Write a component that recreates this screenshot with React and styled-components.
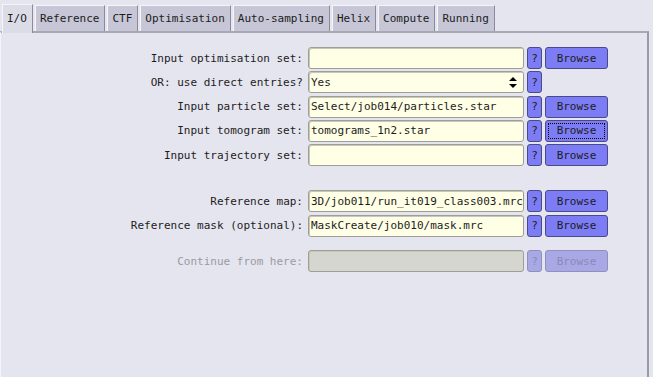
import React from "react";
import styled, { createGlobalStyle } from "styled-components";

const GlobalStyle = createGlobalStyle`
  html, body {
    margin: 0;
    padding: 0;
    background: #e5e5ef;
  }
  body {
    font-family: "DejaVu Sans Mono", "Liberation Mono", monospace;
    font-size: 11px;
    color: #1c1c1c;
  }
`;

const Window = styled.div`
  width: 653px;
  height: 377px;
  display: flex;
  flex-direction: column;
  background: #e5e5ef;
  overflow: hidden;
`;

const TabBar = styled.div`
  display: flex;
  align-items: flex-end;
  height: 31px;
  padding-left: 2px;
  gap: 2px;
`;

const Tab = styled.div`
  height: ${(p) => (p.active ? "29px" : "26px")};
  padding: 0 5px 0 4px;
  display: flex;
  align-items: center;
  box-sizing: border-box;
  background: ${(p) => (p.active ? "#dcdce6" : "#c6c6d6")};
  border-left: 1px solid #f4f4fa;
  border-top: 1px solid #f4f4fa;
  border-right: 1px solid #8a8a98;
  margin-bottom: ${(p) => (p.active ? "-2px" : "0")};
  position: relative;
  z-index: ${(p) => (p.active ? 2 : 1)};
  padding-bottom: ${(p) => (p.active ? "2px" : "0")};
  white-space: nowrap;
`;

const Panel = styled.div`
  flex: 1;
  width: 649px;
  box-sizing: border-box;
  border-top: 2px solid #a8a8b4;
  border-left: 1px solid #f4f4fa;
  border-right: 2px solid #9a9aa6;
  padding-top: 14px;
  display: flex;
  flex-direction: column;
  gap: 2.3px;
`;

const Row = styled.div`
  display: grid;
  grid-template-columns: 304px 216px 15px 63px;
  column-gap: 3px;
  height: 22px;
  align-items: center;
  margin-top: ${(p) => p.space || 0}px;
`;

const Label = styled.div`
  text-align: right;
  padding-right: 2px;
  color: ${(p) => (p.disabled ? "#9a9aa2" : "#1c1c1c")};
  white-space: nowrap;
`;

const Field = styled.div`
  height: 22px;
  box-sizing: border-box;
  border: 1px solid #9e9e98;
  border-radius: 3px;
  background: ${(p) => (p.disabled ? "#d6d6d0" : "#ffffe6")};
  box-shadow: inset 1px 1px 0 #c8c8b8;
  padding: 0 2px;
  display: flex;
  align-items: center;
  overflow: hidden;
  white-space: nowrap;
`;

const SelectField = styled(Field)`
  justify-content: space-between;
  padding-right: 6px;
  background: #ffffe8;
`;

const Arrows = styled.svg`
  display: block;
`;

const HelpButton = styled.div`
  height: 22px;
  box-sizing: border-box;
  border: 1px solid ${(p) => (p.disabled ? "#9090c0" : "#4a4a8a")};
  border-radius: 3px;
  background: ${(p) => (p.disabled ? "#a8a8e4" : "#7c7cf4")};
  color: ${(p) => (p.disabled ? "#8a8ab8" : "#1c1c1c")};
  display: flex;
  align-items: center;
  justify-content: center;
`;

const BrowseButton = styled.div`
  height: 22px;
  box-sizing: border-box;
  border: 1px solid ${(p) => (p.disabled ? "#9090c0" : "#4a4a8a")};
  border-radius: 3px;
  background: ${(p) => (p.disabled ? "#a8a8e4" : "#7c7cf4")};
  color: ${(p) => (p.disabled ? "#8a8ab8" : "#1c1c1c")};
  display: flex;
  align-items: center;
  justify-content: center;
  position: relative;
  ${(p) =>
    p.focused &&
    `
    &::after {
      content: "";
      position: absolute;
      inset: 2px;
      border: 1px dotted #000;
    }
  `}
`;

const tabs = ["I/O", "Reference", "CTF", "Optimisation", "Auto-sampling", "Helix", "Compute", "Running"];

const rows = [
  { label: "Input optimisation set:", value: "", browse: true },
  { label: "OR: use direct entries?", value: "Yes", select: true },
  { label: "Input particle set:", value: "Select/job014/particles.star", browse: true },
  { label: "Input tomogram set:", value: "tomograms_1n2.star", browse: true, focused: true },
  { label: "Input trajectory set:", value: "", browse: true },
  { label: "Reference map:", value: "3D/job011/run_it019_class003.mrc", browse: true, space: 22 },
  { label: "Reference mask (optional):", value: "MaskCreate/job010/mask.mrc", browse: true },
  { label: "Continue from here:", value: "", browse: true, disabled: true, space: 11 },
];

export default function App() {
  return (
    <>
      <GlobalStyle />
      <Window>
        <TabBar>
          {tabs.map((t, i) => (
            <Tab key={t} active={i === 0}>
              {t}
            </Tab>
          ))}
        </TabBar>
        <Panel>
          {rows.map((r) => (
            <Row key={r.label} space={r.space}>
              <Label disabled={r.disabled}>{r.label}</Label>
              {r.select ? (
                <SelectField>
                  <span>{r.value}</span>
                  <Arrows width="8" height="11" viewBox="0 0 8 11">
                    <path d="M4 0 L8 4 L0 4 Z M0 7 L8 7 L4 11 Z" fill="#000" />
                  </Arrows>
                </SelectField>
              ) : (
                <Field disabled={r.disabled}>{r.value}</Field>
              )}
              <HelpButton disabled={r.disabled}>?</HelpButton>
              {r.browse && (
                <BrowseButton disabled={r.disabled} focused={r.focused}>
                  Browse
                </BrowseButton>
              )}
            </Row>
          ))}
        </Panel>
      </Window>
    </>
  );
}
